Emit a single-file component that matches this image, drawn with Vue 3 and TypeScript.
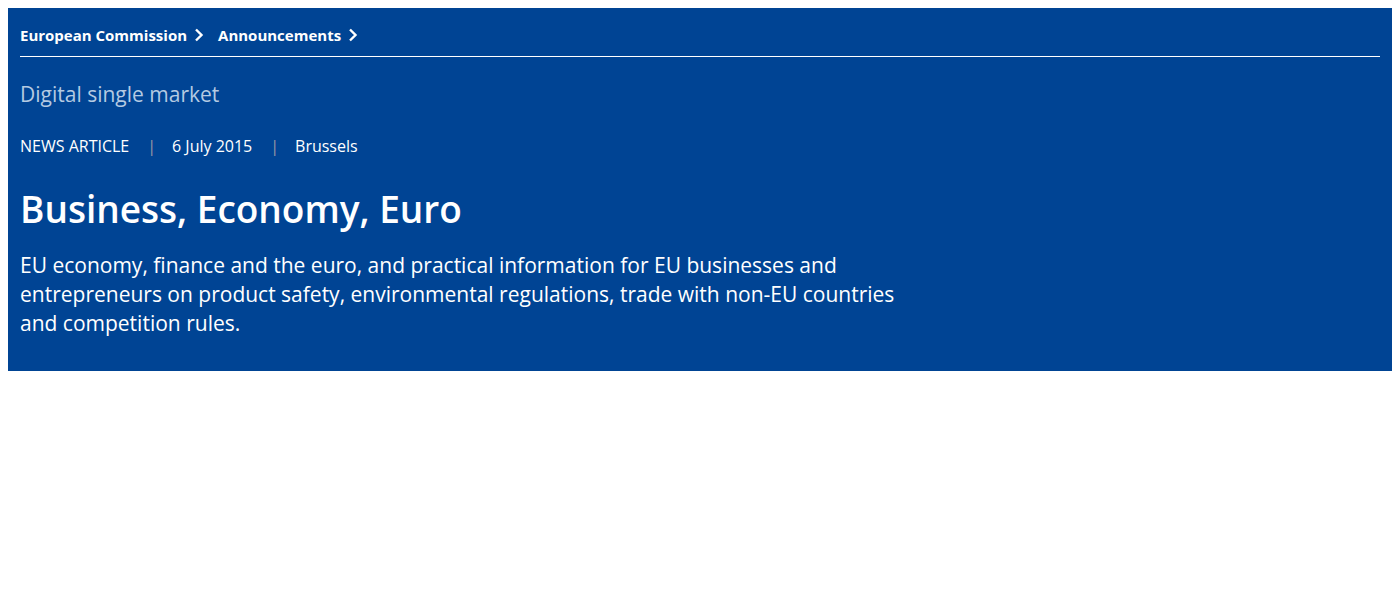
<script setup lang="ts">
interface Crumb {
  label: string
  href: string
}

const crumbs: Crumb[] = [
  { label: 'European Commission', href: '#commission' },
  { label: 'Announcements', href: '#announcements' },
]
const meta: string[] = ['NEWS ARTICLE', '6 July 2015', 'Brussels']
</script>

<template>
  <header class="page-header">
    <nav class="breadcrumb" aria-label="Breadcrumb">
      <ol class="crumbs">
        <li v-for="crumb in crumbs" :key="crumb.label" class="crumb">
          <a class="crumb-link" :href="crumb.href">{{ crumb.label }}</a>
          <svg class="chevron" viewBox="0 0 10 14" aria-hidden="true">
            <path d="M2 1.5 7.5 7 2 12.5" fill="none" stroke="currentColor" stroke-width="2.4" />
          </svg>
        </li>
      </ol>
    </nav>
    <div class="identity">Digital single market</div>
    <ul class="meta">
      <li v-for="item in meta" :key="item" class="meta-item">{{ item }}</li>
    </ul>
    <h1 class="title">Business, Economy, Euro</h1>
    <p class="intro">
      EU economy, finance and the euro, and practical information for EU businesses and
      entrepreneurs on product safety, environmental regulations, trade with non-EU countries and
      competition rules.
    </p>
  </header>
</template>

<style>
body {
  background: #fff;
}
</style>

<style scoped>
.page-header {
  box-sizing: border-box;
  margin: 8px;
  padding: 8px 12px 33px;
  background: #004494;
  color: #fff;
  font-family: "Segoe UI", "Open Sans", "Noto Sans", sans-serif;
}
.breadcrumb {
  border-bottom: 1px solid #fff;
  padding: 7px 0 9px;
}
.crumbs,
.meta {
  display: flex;
  margin: 0;
  padding: 0;
  list-style: none;
}
.crumbs {
  gap: 14px;
}
.crumb {
  display: flex;
  align-items: center;
  gap: 7px;
  line-height: 24px;
}
.crumb-link {
  color: inherit;
  font-size: 15px;
  font-weight: 700;
  text-decoration: none;
}
.chevron {
  width: 10px;
  height: 14px;
}
.identity {
  margin-top: 23px;
  color: #b4cae2;
  font-size: 21px;
  line-height: 28px;
}
.meta {
  margin-top: 26px;
  font-size: 16px;
  line-height: 24px;
}
.meta-item + .meta-item::before {
  content: "|";
  margin: 0 16px 0 18px;
  color: #9a98a4;
}
.title {
  margin: 27px 0 0;
  font-size: 37px;
  font-weight: 600;
  line-height: 48px;
}
.intro {
  max-width: 880px;
  margin: 18px 0 0;
  font-size: 21px;
  line-height: 29px;
}
</style>
